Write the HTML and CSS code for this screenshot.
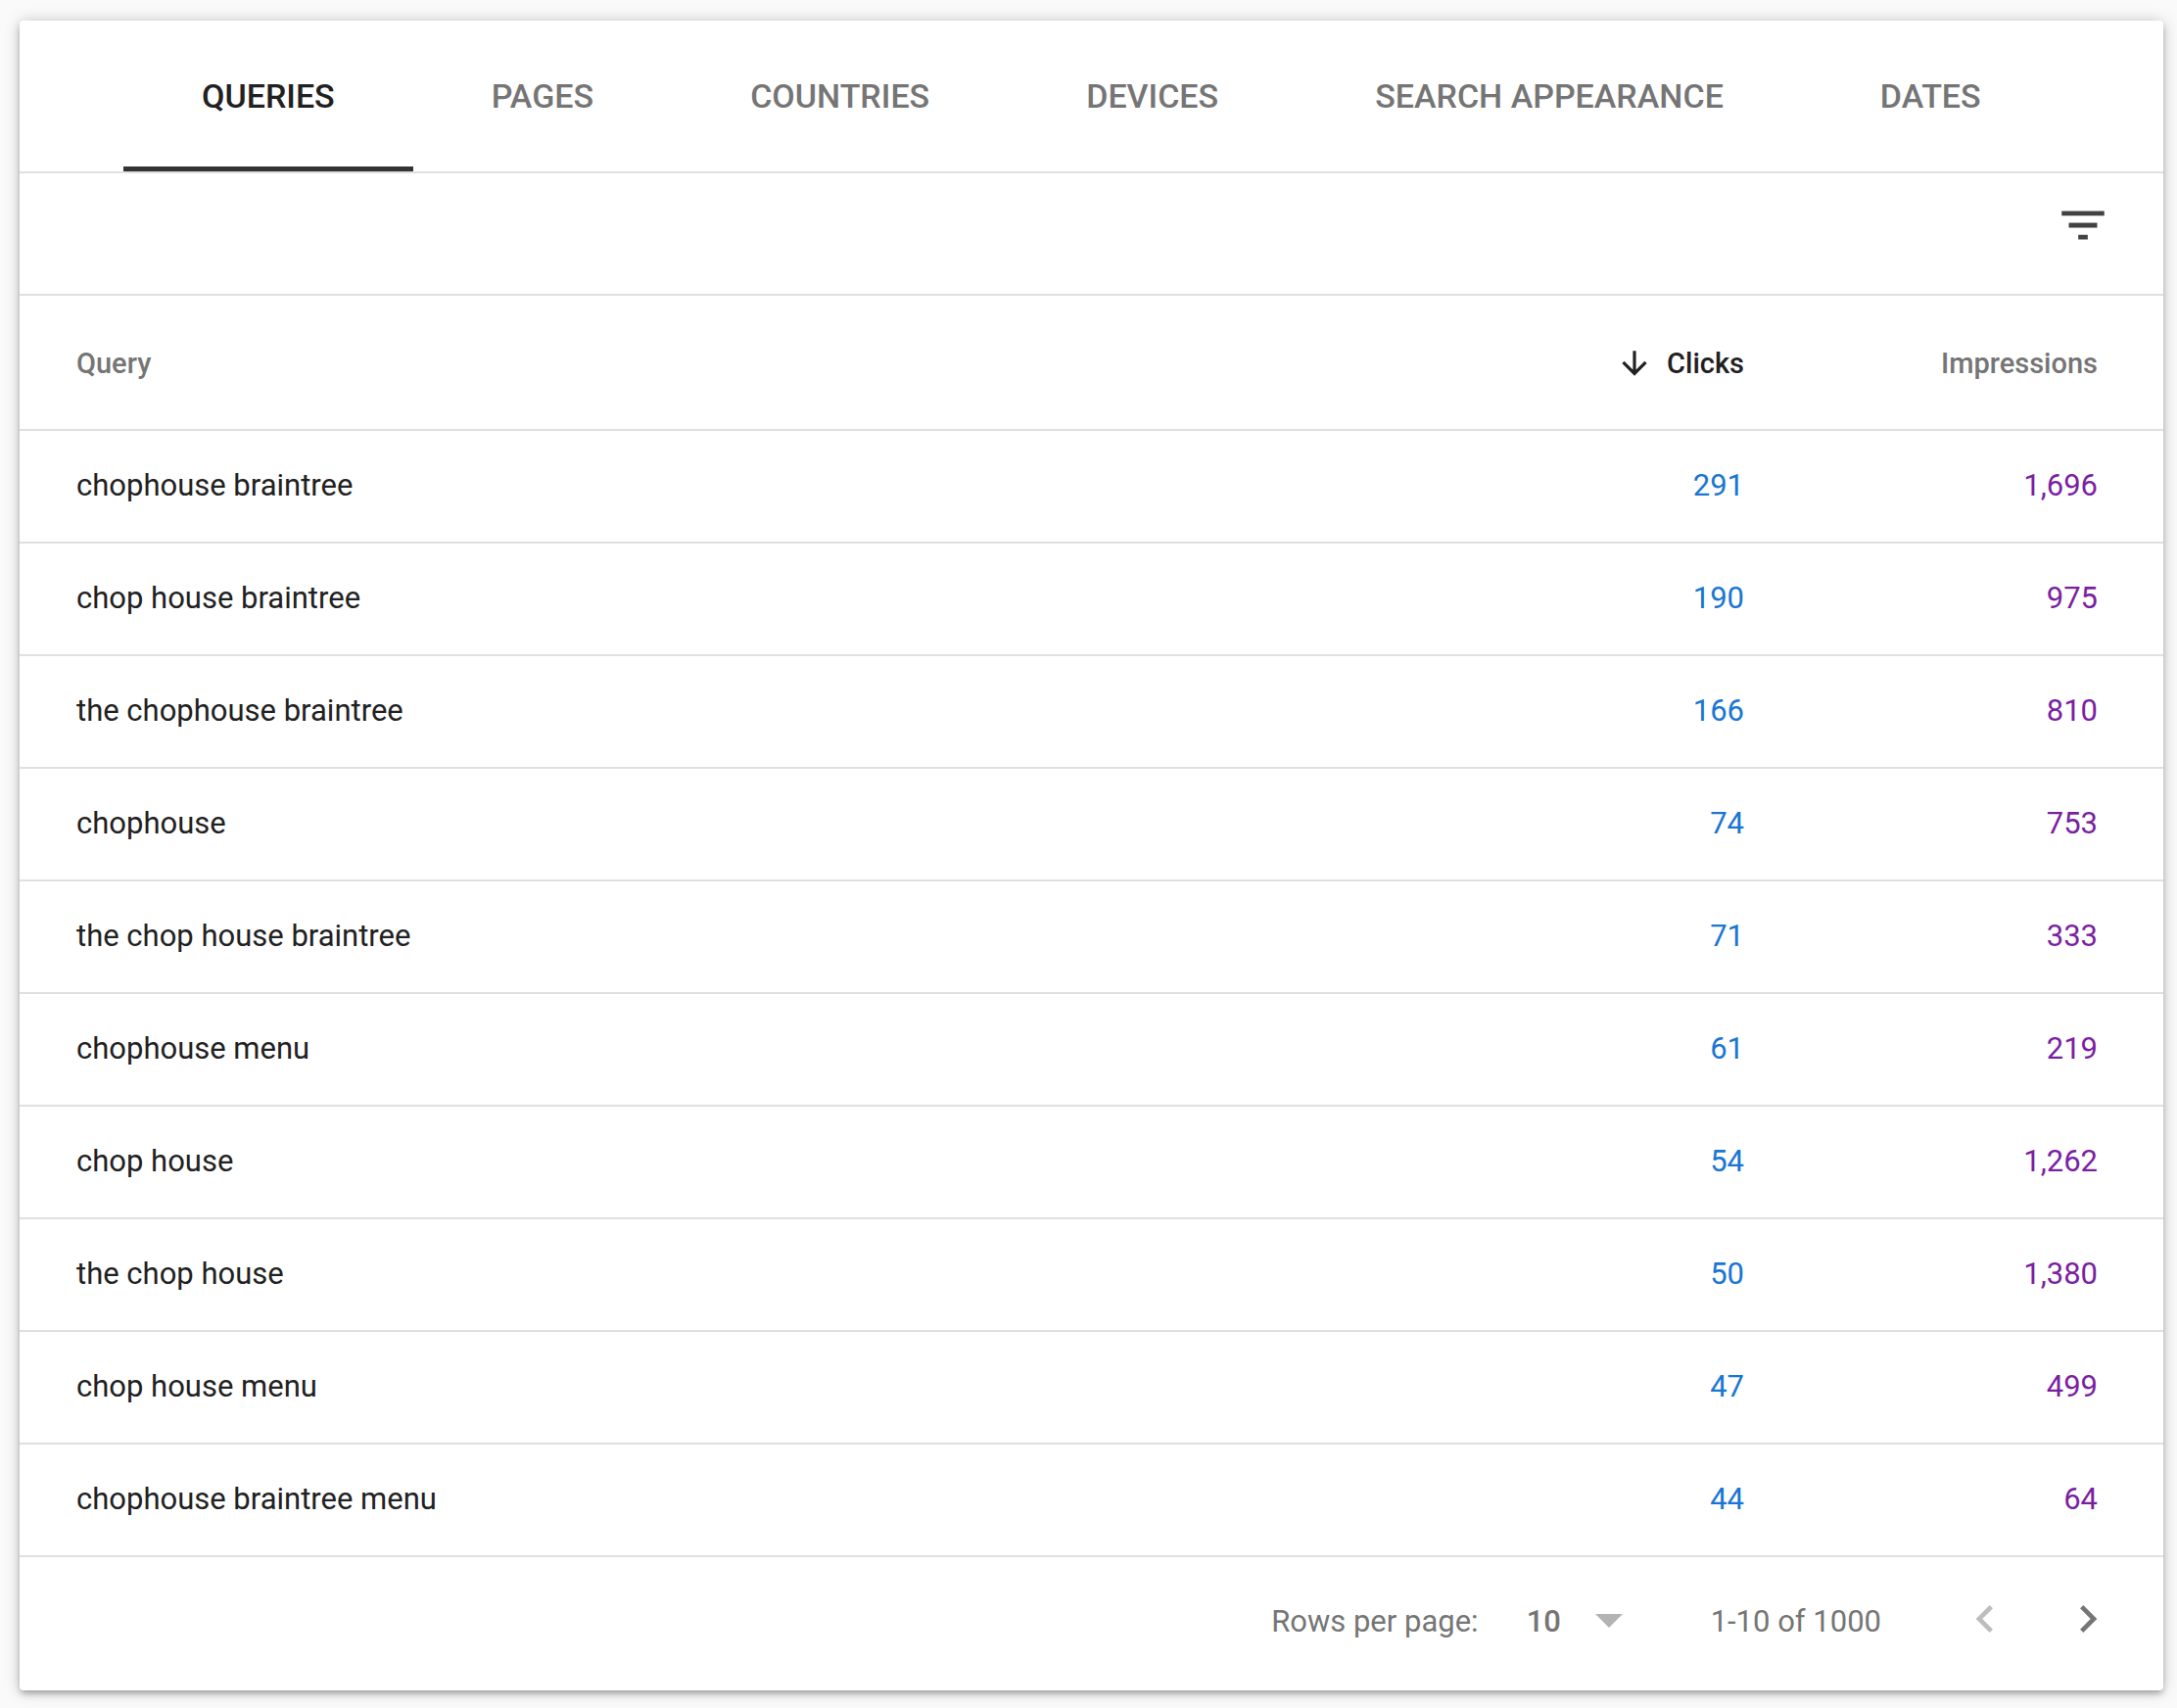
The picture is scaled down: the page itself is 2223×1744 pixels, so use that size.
FILE: index.html
```html
<!DOCTYPE html>
<html lang="en">

<head>
    <meta charset="UTF-8">
    <meta name="viewport" content="width=device-width, initial-scale=1.0">
    <title>Search Performance</title>
    <link rel="stylesheet" href="styles.css">
</head>

<body>
    <main class="card">
        <!-- Tabs -->
        <nav class="tabs">
            <button type="button" class="tab active">QUERIES</button>
            <button type="button" class="tab">PAGES</button>
            <button type="button" class="tab">COUNTRIES</button>
            <button type="button" class="tab">DEVICES</button>
            <button type="button" class="tab">SEARCH APPEARANCE</button>
            <button type="button" class="tab">DATES</button>
        </nav>

        <!-- Filter bar -->
        <div class="toolbar">
            <button type="button" class="icon-button filter" aria-label="Filter">
                <svg viewBox="0 0 24 24"><path d="M10 18h4v-2h-4v2zM3 6v2h18V6H3zm3 7h12v-2H6v2z"/></svg>
            </button>
        </div>

        <!-- Results -->
        <table class="results">
            <thead>
                <tr>
                    <th class="query">Query</th>
                    <th class="clicks" aria-sort="descending">
                        <button type="button" class="sort">
                            <svg viewBox="0 0 24 24"><path d="M20 12l-1.41-1.41L13 16.17V4h-2v12.17l-5.58-5.59L4 12l8 8 8-8z"/></svg>
                            Clicks
                        </button>
                    </th>
                    <th class="impressions">Impressions</th>
                </tr>
            </thead>
            <tbody>
                <tr><td class="query">chophouse braintree</td><td class="clicks">291</td><td class="impressions">1,696</td></tr>
                <tr><td class="query">chop house braintree</td><td class="clicks">190</td><td class="impressions">975</td></tr>
                <tr><td class="query">the chophouse braintree</td><td class="clicks">166</td><td class="impressions">810</td></tr>
                <tr><td class="query">chophouse</td><td class="clicks">74</td><td class="impressions">753</td></tr>
                <tr><td class="query">the chop house braintree</td><td class="clicks">71</td><td class="impressions">333</td></tr>
                <tr><td class="query">chophouse menu</td><td class="clicks">61</td><td class="impressions">219</td></tr>
                <tr><td class="query">chop house</td><td class="clicks">54</td><td class="impressions">1,262</td></tr>
                <tr><td class="query">the chop house</td><td class="clicks">50</td><td class="impressions">1,380</td></tr>
                <tr><td class="query">chop house menu</td><td class="clicks">47</td><td class="impressions">499</td></tr>
                <tr><td class="query">chophouse braintree menu</td><td class="clicks">44</td><td class="impressions">64</td></tr>
            </tbody>
        </table>

        <!-- Pagination -->
        <footer class="pagination">
            <label for="rows">Rows per page:</label>
            <div class="rows-select">
                <select id="rows" name="rows">
                    <option>10</option>
                    <option>25</option>
                    <option>50</option>
                </select>
                <svg class="caret" viewBox="0 0 28 14"><path d="M0 0h28L14 14z"/></svg>
            </div>
            <span class="range">1-10 of 1000</span>
            <div class="pager">
                <button type="button" class="icon-button prev" aria-label="Previous page" disabled>
                    <svg viewBox="0 0 24 24"><path d="M15.41 7.41L14 6l-6 6 6 6 1.41-1.41L10.83 12z"/></svg>
                </button>
                <button type="button" class="icon-button next" aria-label="Next page">
                    <svg viewBox="0 0 24 24"><path d="M10 6L8.59 7.41 13.17 12l-4.58 4.59L10 18l6-6z"/></svg>
                </button>
            </div>
        </footer>
    </main>
</body>

</html>
```
FILE: styles.css
```css
* {
    box-sizing: border-box;
}

body {
    margin: 0;
    padding: 21px 14px 19px 20px;
    background-color: #fafafa;
    color: #212121;
    font-family: Roboto, sans-serif;
    font-size: 31px;
}

button,
select {
    margin: 0;
    padding: 0;
    border: none;
    background: none;
    color: inherit;
    font: inherit;
    cursor: pointer;
}

svg {
    display: block;
    fill: currentColor;
}

.card {
    background-color: #fff;
    border-radius: 4px;
    box-shadow: 0 4px 6px -1px rgba(0, 0, 0, 0.28),
        0 1px 16px rgba(0, 0, 0, 0.22);
}

/* Tabs */
.tabs {
    display: flex;
    height: 156px;
    padding-left: 106px;
    border-bottom: 2px solid #e0e0e0;
}

.tab {
    padding: 0 80px;
    border-top: 5px solid transparent;
    border-bottom: 5px solid transparent;
    color: #757575;
    font-size: 34px;
    font-weight: 500;
    white-space: nowrap;
}

.tab.active {
    border-bottom-color: #333;
    color: #212121;
}

/* Filter bar */
.toolbar {
    display: flex;
    justify-content: flex-end;
    height: 125px;
    padding: 24px 53px 0 0;
    border-bottom: 2px solid #e0e0e0;
}

.icon-button {
    width: 56px;
    height: 56px;
}

.filter {
    width: 58px;
    height: 58px;
    color: #424242;
}

/* Results table */
.results {
    width: 100%;
    border-collapse: separate;
    border-spacing: 0;
    table-layout: fixed;
}

th,
td {
    padding: 0;
    border-bottom: 2px solid #e0e0e0;
    text-align: right;
}

th {
    height: 138px;
    padding-top: 2px;
    color: #757575;
    font-size: 29px;
    font-weight: 500;
}

td {
    height: 115px;
    padding-bottom: 3px;
}

.query {
    padding-left: 58px;
    text-align: left;
}

.clicks {
    width: 300px;
}

.impressions {
    width: 428px;
    padding-right: 67px;
}

td.clicks {
    color: #1976d2;
}

td.impressions {
    color: #7b1fa2;
}

.sort {
    display: flex;
    align-items: center;
    gap: 14px;
    margin-left: auto;
    color: #212121;
}

.sort svg {
    width: 38px;
    height: 38px;
}

/* Pagination */
.pagination {
    display: flex;
    align-items: center;
    justify-content: flex-end;
    height: 136px;
    padding: 0 49px 6px 58px;
    color: #757575;
}

.rows-select {
    display: flex;
    align-items: center;
    margin-left: 49px;
}

.rows-select select {
    width: 98px;
    margin-right: -28px;
    appearance: none;
    font-weight: 500;
}

.caret {
    width: 28px;
    height: 14px;
    color: #b3b3b3;
    pointer-events: none;
}

.range {
    margin-left: 90px;
}

.pager {
    display: flex;
    gap: 49px;
    margin-left: 78px;
    padding-bottom: 5px;
}

.prev {
    color: #bdbdbd;
}
```
